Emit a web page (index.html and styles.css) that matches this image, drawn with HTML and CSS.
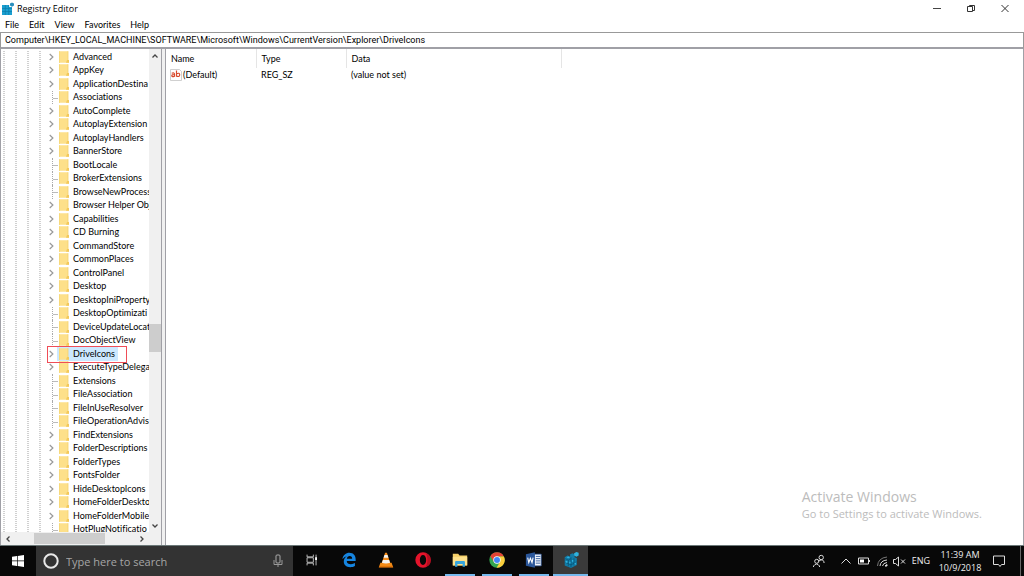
FILE: index.html
```html
<!DOCTYPE html>
<html lang="en">
<head>
<meta charset="utf-8">
<title>Registry Editor</title>
<link rel="stylesheet" href="styles.css">
</head>
<body>
<svg class="defs" aria-hidden="true">
  <symbol id="chev" viewBox="0 0 6 8"><path d="M1.2 1 4.4 4 1.2 7" fill="none" stroke="#999" stroke-width="1.2"/></symbol>
  <symbol id="folder" viewBox="0 0 10 12"><path d="M0 .2h9V9h1v2.800H0z" fill="#fde08a"/><path d="M0 .2h.8V12H0z" fill="#f5d777"/><path d="M8 9h2v2.800H7z" fill="#f3c95a"/><path d="M9 .2V9" stroke="#f3d06c" stroke-width=".8"/></symbol>
</svg>

<header class="titlebar">
  <svg class="app-icon" viewBox="0 0 13 13"><path d="M1 3h7v2h3v8H1z" fill="#1b9fd0"/><path d="M1 6.500h10M1 9.500h10M4.300 3v10M7.700 3v10" stroke="#0b7cab" stroke-width=".7"/><path d="M9 1.500 11 .5l2 1v2l-2 1.200-2-1.200z" fill="#2a8fbd"/></svg>
  <h1>Registry Editor</h1>
  <div class="window-buttons">
    <button aria-label="Minimize"><svg viewBox="0 0 10 10"><path d="M1 4.500h8" stroke="#444" fill="none"/></svg></button>
    <button aria-label="Restore"><svg viewBox="0 0 10 10"><path d="M1.500 2.500h5v5h-5zM3.500 2.500v-1h5v5h-2" stroke="#333" fill="none"/></svg></button>
    <button aria-label="Close"><svg viewBox="0 0 10 10"><path d="M1.500 1l7 7M8.500 1l-7 7" stroke="#333" fill="none"/></svg></button>
  </div>
</header>
<nav class="menubar"><button>File</button><button>Edit</button><button>View</button><button>Favorites</button><button>Help</button></nav>
<input class="address" type="text" aria-label="Address" value="Computer\HKEY_LOCAL_MACHINE\SOFTWARE\Microsoft\Windows\CurrentVersion\Explorer\DriveIcons">

<main class="panes">
  <section class="tree-pane">
    <div class="tree-view">
      <ul class="tree" role="tree" aria-label="Registry keys">
        <li class="parent"><svg class="chev"><use href="#chev"/></svg><svg class="folder"><use href="#folder"/></svg><span>Advanced</span></li>
        <li class="parent"><svg class="chev"><use href="#chev"/></svg><svg class="folder"><use href="#folder"/></svg><span>AppKey</span></li>
        <li class="parent"><svg class="chev"><use href="#chev"/></svg><svg class="folder"><use href="#folder"/></svg><span>ApplicationDestina</span></li>
        <li><i></i><svg class="folder"><use href="#folder"/></svg><span>Associations</span></li>
        <li class="parent"><svg class="chev"><use href="#chev"/></svg><svg class="folder"><use href="#folder"/></svg><span>AutoComplete</span></li>
        <li class="parent"><svg class="chev"><use href="#chev"/></svg><svg class="folder"><use href="#folder"/></svg><span>AutoplayExtension</span></li>
        <li class="parent"><svg class="chev"><use href="#chev"/></svg><svg class="folder"><use href="#folder"/></svg><span>AutoplayHandlers</span></li>
        <li class="parent"><svg class="chev"><use href="#chev"/></svg><svg class="folder"><use href="#folder"/></svg><span>BannerStore</span></li>
        <li><i></i><svg class="folder"><use href="#folder"/></svg><span>BootLocale</span></li>
        <li><i></i><svg class="folder"><use href="#folder"/></svg><span>BrokerExtensions</span></li>
        <li><i></i><svg class="folder"><use href="#folder"/></svg><span>BrowseNewProcess</span></li>
        <li class="parent"><svg class="chev"><use href="#chev"/></svg><svg class="folder"><use href="#folder"/></svg><span>Browser Helper Obj</span></li>
        <li class="parent"><svg class="chev"><use href="#chev"/></svg><svg class="folder"><use href="#folder"/></svg><span>Capabilities</span></li>
        <li class="parent"><svg class="chev"><use href="#chev"/></svg><svg class="folder"><use href="#folder"/></svg><span>CD Burning</span></li>
        <li class="parent"><svg class="chev"><use href="#chev"/></svg><svg class="folder"><use href="#folder"/></svg><span>CommandStore</span></li>
        <li class="parent"><svg class="chev"><use href="#chev"/></svg><svg class="folder"><use href="#folder"/></svg><span>CommonPlaces</span></li>
        <li class="parent"><svg class="chev"><use href="#chev"/></svg><svg class="folder"><use href="#folder"/></svg><span>ControlPanel</span></li>
        <li class="parent"><svg class="chev"><use href="#chev"/></svg><svg class="folder"><use href="#folder"/></svg><span>Desktop</span></li>
        <li class="parent"><svg class="chev"><use href="#chev"/></svg><svg class="folder"><use href="#folder"/></svg><span>DesktopIniProperty</span></li>
        <li><i></i><svg class="folder"><use href="#folder"/></svg><span>DesktopOptimizati</span></li>
        <li><i></i><svg class="folder"><use href="#folder"/></svg><span>DeviceUpdateLocat</span></li>
        <li><i></i><svg class="folder"><use href="#folder"/></svg><span>DocObjectView</span></li>
        <li class="parent selected"><svg class="chev"><use href="#chev"/></svg><svg class="folder"><use href="#folder"/></svg><span>DriveIcons</span></li>
        <li class="parent"><svg class="chev"><use href="#chev"/></svg><svg class="folder"><use href="#folder"/></svg><span>ExecuteTypeDelega</span></li>
        <li><i></i><svg class="folder"><use href="#folder"/></svg><span>Extensions</span></li>
        <li><i></i><svg class="folder"><use href="#folder"/></svg><span>FileAssociation</span></li>
        <li><i></i><svg class="folder"><use href="#folder"/></svg><span>FileInUseResolver</span></li>
        <li><i></i><svg class="folder"><use href="#folder"/></svg><span>FileOperationAdvis</span></li>
        <li class="parent"><svg class="chev"><use href="#chev"/></svg><svg class="folder"><use href="#folder"/></svg><span>FindExtensions</span></li>
        <li class="parent"><svg class="chev"><use href="#chev"/></svg><svg class="folder"><use href="#folder"/></svg><span>FolderDescriptions</span></li>
        <li class="parent"><svg class="chev"><use href="#chev"/></svg><svg class="folder"><use href="#folder"/></svg><span>FolderTypes</span></li>
        <li class="parent"><svg class="chev"><use href="#chev"/></svg><svg class="folder"><use href="#folder"/></svg><span>FontsFolder</span></li>
        <li class="parent"><svg class="chev"><use href="#chev"/></svg><svg class="folder"><use href="#folder"/></svg><span>HideDesktopIcons</span></li>
        <li class="parent"><svg class="chev"><use href="#chev"/></svg><svg class="folder"><use href="#folder"/></svg><span>HomeFolderDeskto</span></li>
        <li class="parent"><svg class="chev"><use href="#chev"/></svg><svg class="folder"><use href="#folder"/></svg><span>HomeFolderMobile</span></li>
        <li><i></i><svg class="folder"><use href="#folder"/></svg><span>HotPlugNotificatio</span></li>
      </ul>
    </div>
    <div class="vscroll">
      <svg viewBox="0 0 8 6"><path d="M1.500 4.500 4 2l2.500 2.500" fill="none" stroke="#444" stroke-width="1.300"/></svg>
      <div class="vtrack"><div class="vthumb"></div></div>
      <svg viewBox="0 0 8 6"><path d="M1.500 1.500 4 4l2.500-2.500" fill="none" stroke="#444" stroke-width="1.300"/></svg>
    </div>
    <div class="hscroll">
      <svg viewBox="0 0 6 8"><path d="M4.500 1.500 2 4l2.500 2.500" fill="none" stroke="#444" stroke-width="1.300"/></svg>
      <div class="htrack"><div class="hthumb"></div></div>
      <svg viewBox="0 0 6 8"><path d="M1.500 1.500 4 4 1.500 6.500" fill="none" stroke="#444" stroke-width="1.300"/></svg>
    </div>
  </section>

  <section class="value-pane">
    <table class="values">
      <colgroup><col class="c-name"><col class="c-type"><col class="c-data"></colgroup>
      <thead><tr><th>Name</th><th>Type</th><th>Data</th></tr></thead>
      <tbody><tr>
        <td class="name"><svg class="string-icon" viewBox="0 0 12 12"><path d="M.5.500h9l2 2v9H.5z" fill="#fff" stroke="#c4c4c4" stroke-width=".8"/><path d="M1.700 4.200q2.800-1 2.800 1v2.600M4.500 5.500q-2.700 0-2.700 1.300 0 1.600 2.700.4M6.500 1.500v6.300M6.500 4.800q3.200-1.500 3.200 1t-3.200 1.300" fill="none" stroke="#d8492c" stroke-width="1.200"/></svg>(Default)</td>
        <td>REG_SZ</td><td>(value not set)</td>
      </tr></tbody>
    </table>
    <aside class="activate"><h2>Activate Windows</h2><p>Go to Settings to activate Windows.</p></aside>
  </section>
</main>

<footer class="taskbar">
  <button class="start" aria-label="Start"><svg viewBox="0 0 12 12"><path d="M0 1.700 5 1v4.600H0zM5.700.900 12 0v5.600H5.700zM0 6.300h5V11l-5-.7zM5.700 6.300H12V12l-6.300-.9z" fill="#fff"/></svg></button>
  <label class="search">
    <svg class="cortana" viewBox="0 0 16 16"><circle cx="8" cy="8" r="6.700" fill="none" stroke="#e8e8e8" stroke-width="2"/></svg>
    <input type="text" placeholder="Type here to search" aria-label="Type here to search">
    <svg class="mic" viewBox="0 0 10 14"><rect x="3" y="1" width="4" height="8" rx="1" fill="none" stroke="#aaa"/><path d="M1 6v4.500h8V6M5 10.500V13" fill="none" stroke="#999"/></svg>
  </label>
  <div class="tasks">
    <button aria-label="Task View"><svg viewBox="0 0 20 20"><path d="M4.500 4v2.500h7V4M4.500 16v-2.500h7V16M4.500 7.500h7v5h-7zM14.500 4v12" fill="none" stroke="#ccc"/><path d="M13.500 7h2v3h-2z" fill="#fff"/></svg></button>
    <button aria-label="Edge"><svg viewBox="0 0 20 20"><path d="M2.700 9C3.500 4.500 6.600 2 10.400 2c4.500 0 7 3.200 7 7.100v1.900H7.500c.1 2.300 2 3.600 4.700 3.600 1.700 0 3.100-.4 4.400-1.200v3.300c-1.400.9-3.200 1.300-5.200 1.300-4.600 0-7.200-2.600-7.200-6.300 0-2.500 1.200-4.700 3.400-6-2 .5-3.600 1.600-4.900 3.300zm4.900-.4h5.900c0-1.900-.9-3-2.700-3-1.700 0-2.900 1.200-3.200 3z" fill="#1685e0"/></svg></button>
    <button aria-label="VLC media player"><svg viewBox="0 0 20 20"><path d="M3.800 13h12.400l1.800 5H2z" fill="#f08a16"/><path d="M9 2h2l4 12.500q-5 2-10 0z" fill="#f48b1b"/><path d="M8.300 4.500h3.400L12.700 7.500H7.300zM6.500 10h7l1 3q-4.500 1.700-9 0z" fill="#f2f2f2"/><path d="M2.400 17h15.200l.4 1.300H2z" fill="#d96c09"/></svg></button>
    <button aria-label="Opera"><svg viewBox="0 0 20 20"><path d="M10 1.500a8.500 8.500 0 1 0 0 17 8.500 8.500 0 0 0 0-17zm0 3c2.100 0 3.500 2.300 3.500 5.500s-1.400 5.500-3.500 5.500S6.500 13.200 6.500 10 7.900 4.500 10 4.500z" fill="#e4142b"/><path d="M12.500 2.200a8 8 0 0 1 0 15.600c3-2.300 3.500-12.500 0-15.600z" fill="#b40e20"/></svg></button>
    <button class="open" aria-label="File Explorer"><svg viewBox="0 0 20 20"><path d="M2 3h6l1.500 2H18v11H2z" fill="#f5cf68"/><path d="M2 6.500h16V16H2z" fill="#fce08c"/><path d="M4.500 17.500v-5.300q0-1.200 1.200-1.200h8.600q1.200 0 1.200 1.200v5.300h-2.600V14.500H7.100v3z" fill="#35a5df"/></svg></button>
    <button class="open" aria-label="Chrome"><svg viewBox="0 0 20 20"><circle cx="10" cy="10" r="8.500" fill="#34a650"/><path d="M2.600 5.800A8.500 8.500 0 0 1 17.600 6H10L6.500 12z" fill="#e34335"/><path d="M17.600 6A8.500 8.500 0 0 1 9.500 18.500L13.500 12 12 6z" fill="#fbce3c"/><circle cx="10" cy="10" r="4.100" fill="#fff"/><circle cx="10" cy="10" r="3.300" fill="#4286f4"/></svg></button>
    <button class="open" aria-label="Word"><svg viewBox="0 0 20 20"><path d="M10 3.500h8v13h-8z" fill="#f2f5fb" stroke="#2b579a" stroke-width=".8"/><path d="M12 6h5M12 8.500h5M12 11h5M12 13.500h5" stroke="#2b579a"/><path d="M1 3.500 11 1.500v17L1 16.500z" fill="#2b579a"/><path d="m3 7.300 1.200 5.500L6 8l1.800 4.800L9 7.300" fill="none" stroke="#fff" stroke-width="1.200"/></svg></button>
    <button class="open active" aria-label="Registry Editor"><svg viewBox="0 0 20 20"><path d="m3 7 3-2 3 1V3.500l3-1L14 4v3l2.500 1v7.500L10 19l-7-3z" fill="#127ca8"/><path d="m3.500 8.500 3.500 1.500 3-1.500m-3 1.500V17M10 7v11M13.300 8v8M3.500 12.500 10 15.500l6-3.500" fill="none" stroke="#075273" stroke-width=".8"/><path d="m13.500 2.500 2.500-1.500 2.500 1v3L16 6.500 13.500 5zM5 7l2-1 2 1-2 1zM4 11h2v2H4zM8 12h1.500v2H8zM11 10h1.500v2H11zM14 13h1.500v2H14z" fill="#2fb3df"/></svg></button>
  </div>
  <div class="tray">
    <button class="people" aria-label="People"><svg viewBox="0 0 14 14"><circle cx="9.200" cy="3.500" r="2.200"/><path d="M6.500 7.500Q9.500 4.300 12 7.500V9"/><circle cx="4.700" cy="7.300" r="2"/><path d="M1.500 13V12q3-4 6 0v1"/></svg></button>
    <button class="caret" aria-label="Show hidden icons"><svg viewBox="0 0 14 14"><path d="M2.500 9.500 7 5l4.500 4.500"/></svg></button>
    <button class="battery" aria-label="Battery"><svg viewBox="0 0 14 14"><path d="M1.500 4h10v6h-10zM12.500 6v2"/><path d="M3 5.500h4v3H3z" fill="#fff" stroke="none"/></svg></button>
    <button class="wifi" aria-label="Network"><svg viewBox="0 0 14 14"><path d="M2.500 12Q3 4 12 3" stroke="#777"/><path d="M5 12Q5.500 6.500 12 6M7.500 12Q8 9 12 8.500"/><path d="M10 12l2-1.500V12z" fill="#fff"/></svg></button>
    <button class="volume" aria-label="Volume muted"><svg viewBox="0 0 14 14"><path d="M1.500 5.500h2L6.500 3v9L3.500 9.500h-2zM9 5.500l4 4M13 5.500l-4 4"/></svg></button>
    <button class="lang">ENG</button>
    <button class="clock"><time>11:39 AM</time><time>10/9/2018</time></button>
    <button class="notes" aria-label="Notifications"><svg viewBox="0 0 14 14"><path d="M1.500 2h11v8.500h-3L8 12.500 6.500 10.500h-5z"/></svg></button>
    <button class="show-desktop" aria-label="Show desktop"></button>
  </div>
</footer>
</body>
</html>
```

FILE: styles.css
```css
* { box-sizing: border-box; }
body {
  margin: 0;
  height: 100vh;
  display: flex;
  flex-direction: column;
  overflow: hidden;
  background: #fff;
  color: #000;
  font: 9px/12px Lato, "Open Sans", sans-serif;
  font-variant-ligatures: none;
}
button, input { font: inherit; color: inherit; border: 0; padding: 0; background: none; outline: 0; }
h1, h2, p, ul { margin: 0; padding: 0; font-weight: normal; font-size: inherit; }
svg { display: block; flex: none; }
.defs { position: absolute; width: 0; height: 0; }

.titlebar { display: flex; align-items: center; height: 17px; flex: none; font-family: "Open Sans", sans-serif; }
.app-icon { width: 13px; height: 13px; margin: 0 3px 0 1px; }
.titlebar h1 { flex: 1; }
.window-buttons { display: flex; padding-right: 2px; }
.window-buttons button { width: 34px; height: 16px; display: grid; place-items: center; }
.window-buttons svg { width: 10px; height: 10px; }

.menubar { display: flex; gap: 10px; height: 15px; padding-left: 5px; flex: none; }
.address { height: 17px; flex: none; width: 100%; padding: 0 4px; border: 1px solid #999; border-bottom: 2px solid #a0a0a6; font-family: Roboto, sans-serif; }

.panes { flex: 1; min-height: 0; display: flex; background: #f0f0f0; gap: 3px; }
.tree-pane {
  width: 162px;
  flex: none;
  display: grid;
  grid-template: minmax(0, 1fr) 13px / minmax(0, 1fr) 12px;
  border: solid #a0a0a6;
  border-width: 0 1px;
  background: #f0f0f0;
}
.tree-view { overflow: hidden; background: #fff; padding-top: 1px; }
.tree {
  height: 486px;
  list-style: none;
  display: flex;
  flex-direction: column;
  background:
    repeating-linear-gradient(#fff 0 1px, transparent 1px 2px),
    repeating-linear-gradient(90deg, transparent 0 2px, #d0d0d0 2px 4px, transparent 4px 12px) 0 0 / 48px 100% no-repeat;
}
.tree li { flex: 1; min-height: 0; display: flex; align-items: center; position: relative; padding-left: 47px; white-space: nowrap; }
.chev { width: 7px; height: 8px; margin-right: 4px; }
.tree i { flex: none; width: 7px; align-self: stretch; margin: 0 0 0 4px; border-left: 1px dotted #aaa; background: linear-gradient(#bbb, #bbb) 0 7px / 5px 1px no-repeat; }
.folder { width: 10px; height: 12px; }
.tree span { padding: 0 3px 0 4px; }
.selected { background: linear-gradient(#cce8ff, #cce8ff) 56px 0 / 61px 100% no-repeat; }
.selected::after { content: ""; position: absolute; z-index: 1; left: 46px; top: -1px; width: 78px; height: 15px; border: 1px solid #ef4d57; }

.vscroll { display: flex; flex-direction: column; align-items: center; padding: 4px 0 3px; }
.vscroll svg { width: 8px; height: 6px; }
.vtrack { flex: 1; width: 100%; padding-top: 265px; }
.vthumb { height: 28px; background: #cdcdcd; }
.hscroll { grid-column: 1 / 2; display: flex; align-items: center; padding: 0 4px; }
.hscroll svg { width: 6px; height: 8px; }
.htrack { flex: 1; padding-left: 23px; }
.hthumb { width: 71px; height: 11px; background: #cdcdcd; }

.value-pane { flex: 1; min-width: 0; display: flex; flex-direction: column; justify-content: space-between; background: #fff; border: solid #a0a0a6; border-width: 0 1px; }
.values { width: 396px; table-layout: fixed; border-collapse: collapse; text-align: left; }
.c-name, .c-type { width: 90px; }
.values th { height: 19px; padding: 1px 5px 0; font-weight: normal; border-right: 1px solid #e5e5e5; }
.values td { height: 14px; padding: 0 5px; }
.values td.name { display: flex; align-items: center; gap: 1px; padding: 0 0 0 4px; }
.string-icon { width: 12px; height: 12px; }
.activate { align-self: flex-end; margin: 0 41px 24px 0; color: #bcbcbc; font: 11px/15px "Open Sans", sans-serif; }
.activate h2 { font-size: 14px; line-height: 18px; }

.taskbar { height: 31px; flex: none; display: flex; background: #080808; color: #eee; border-top: 1px solid #6b7878; font-family: "Open Sans", sans-serif; }
.taskbar button { display: grid; place-items: center; flex: none; }
.start { width: 36px; }
.start svg { width: 12px; height: 12px; }
.search { width: 257px; display: flex; align-items: center; gap: 7px; padding: 0 10px 0 7px; background: #333; }
.cortana { width: 16px; height: 16px; }
.search input { flex: 1; min-width: 0; font-size: 11px; line-height: 15px; }
.search input::placeholder { color: #a6a6a6; opacity: 1; }
.mic { width: 10px; height: 14px; }
.tasks { display: flex; gap: 2px; padding-left: 1px; flex: 1; }
.tasks button { width: 35px; border-bottom: 2px solid transparent; }
.tasks svg { width: 18px; height: 18px; }
.tasks .open { background: linear-gradient(#76b9ed, #76b9ed) center bottom / 30px 2px no-repeat border-box; }
.tasks .active { background: linear-gradient(#76b9ed, #76b9ed) center bottom / 100% 2px no-repeat border-box, #3a3a3a; }
.tray { display: flex; }
.tray svg { width: 14px; height: 14px; fill: none; stroke: #ddd; }
.people { width: 36px; }
.caret { width: 18px; }
.battery, .wifi { width: 18px; }
.volume { width: 16px; }
.lang { width: 28px; }
.taskbar .clock { width: 50px; align-content: center; line-height: 13px; }
.notes { width: 27px; margin-right: 8px; }
.show-desktop { width: 4px; border-left: 1px solid #666; }
```
